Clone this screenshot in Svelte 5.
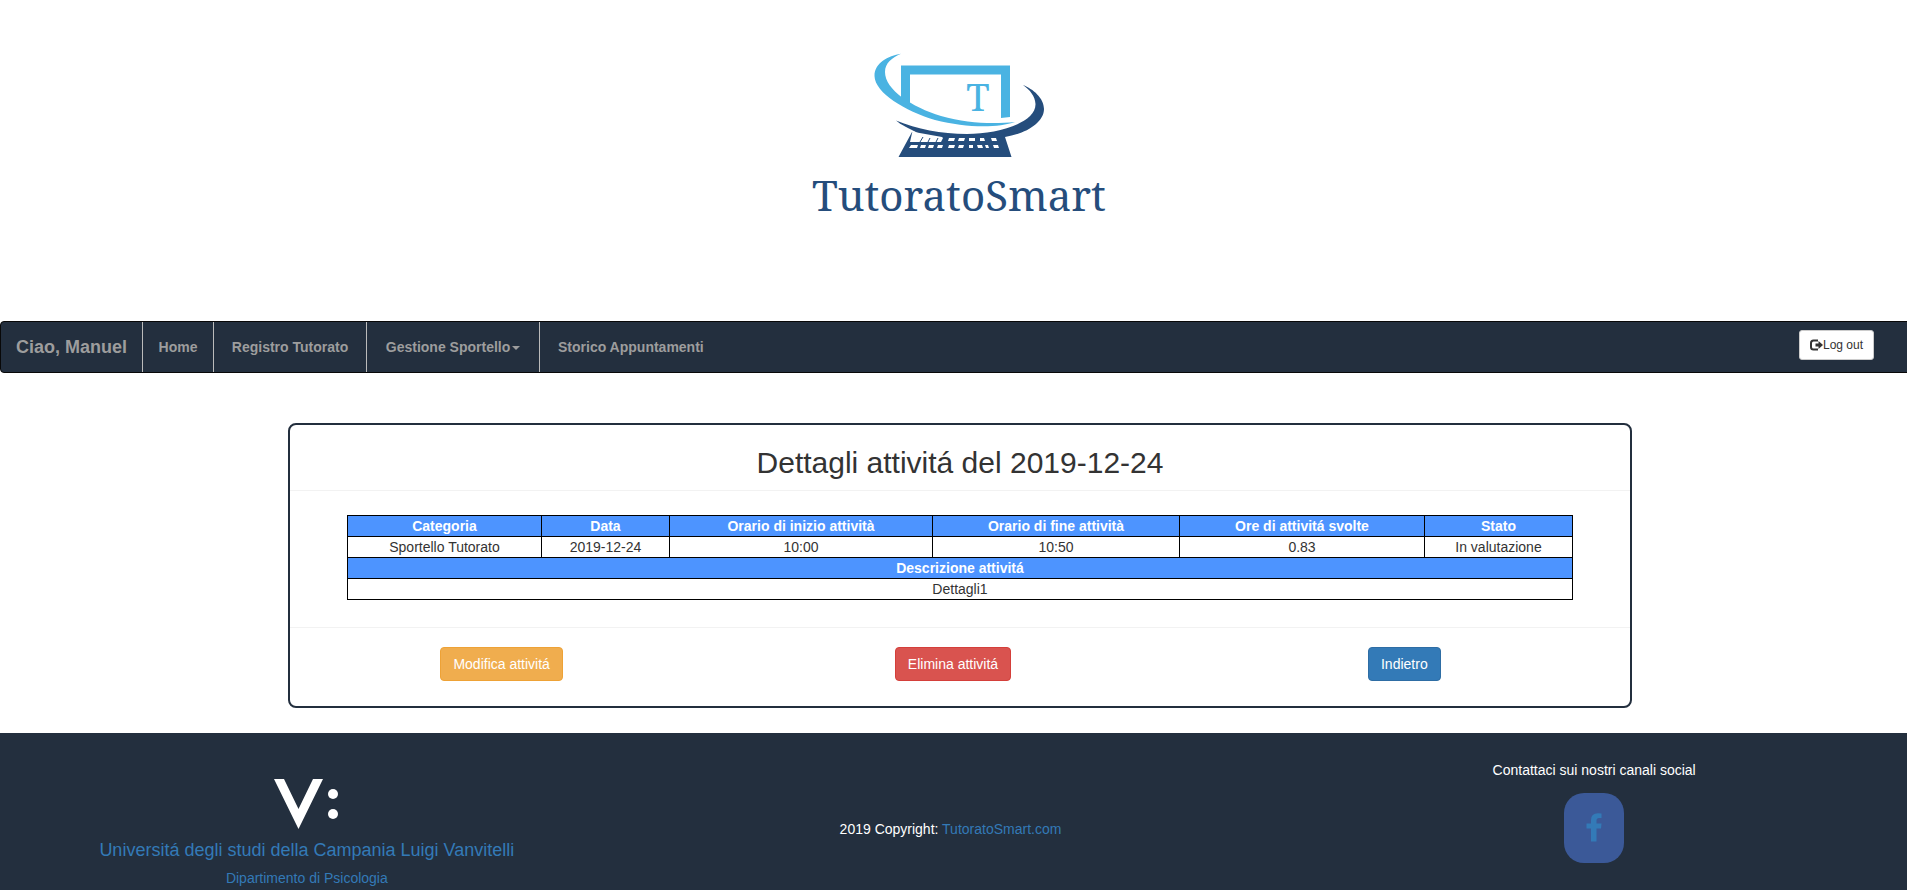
<script>
  const links = [
    { label: 'Home' },
    { label: 'Registro Tutorato' },
    { label: 'Gestione Sportello', menu: true },
    { label: 'Storico Appuntamenti' }
  ];
  const activity = {
    date: '2019-12-24',
    fields: [
      ['Categoria', 'Sportello Tutorato', 194],
      ['Data', '2019-12-24', 128],
      ['Orario di inizio attività', '10:00', 263],
      ['Orario di fine attività', '10:50', 247],
      ['Ore di attivitá svolte', '0.83', 245],
      ['Stato', 'In valutazione', 148]
    ],
    description: 'Dettagli1'
  };
  const total = activity.fields.reduce((sum, field) => sum + field[2], 0);
</script>

<div class="page">
  <header>
    <svg class="logo" viewBox="0 0 340 200" role="img" aria-label="TutoratoSmart">
      <g fill="#4ab3e2">
        <path d="M111 72V35.500H220V87L211 88V44.500H120V78Z" />
        <path d="M111 23.800C98 26 84.500 33 84.500 46C85 63 115 81 145 90C176 98 208 98 225 92C205 94 178 94 151 86C122 77 95 60 95 42C95 33 102 28 111 23.800Z" />
      </g>
      <g fill="#254d7c">
        <path d="M233 55C243 59 254 68 254 79C254 93 235 104 215 107L221.500 127H108.500L122 102L128 103C118 98 111 95 106 90.500C127 99 151 104 177 104C208 104 246 93 245.500 74C245 66 240 60 233 55Z" />
      </g>
      <g fill="#fff">
        <path d="M122.500 101L127 102.500L152 107L153 108L151 112H120Z" />
        <path d="M159 108h6l-1 3h-6ZM169 108h6l-1 3h-6ZM179 108h6v3h-6ZM190 108h4l1 3h-5ZM201 108h5l1 3h-5Z" />
        <path d="M121 115h7l-1 3h-8ZM131 115h5l-1 3h-5ZM139 115h5l-1 3h-5ZM148 115h5l-1 3h-5ZM159 115h6l-1 3h-6ZM169 115h5l-1 3h-5ZM179 115h4v3h-4ZM187 115h5l1 3h-5ZM195 115h3l1 3h-3ZM203 115h5l1 3h-5Z" />
      </g>
      <path d="M130 112l3-5M138 112l2-4M146 112l2-4" stroke="#254d7c" stroke-width="1" />
      <text class="initial" x="188" y="81" text-anchor="middle">T</text>
      <text class="wordmark" x="169" y="181" text-anchor="middle">TutoratoSmart</text>
    </svg>
  </header>

  <nav>
    <a class="brand" href="#home">Ciao, Manuel</a>
    <ul>
      {#each links as link}
        <li>
          <a href="#{link.label}">{link.label}{#if link.menu}<span class="caret"></span>{/if}</a>
        </li>
      {/each}
    </ul>
    <button class="logout" type="button">
      <svg width="13" height="12" viewBox="0 0 13 12" aria-hidden="true">
        <path d="M8 1.500H3.500Q1 1.500 1 4V8Q1 10.500 3.500 10.500H8" fill="none" stroke="currentColor" stroke-width="2" />
        <path d="M5.500 4.500H8.500V2L13 6L8.500 10V7.500H5.500Z" fill="currentColor" />
      </svg>Log out
    </button>
  </nav>

  <main>
    <h2>Dettagli attivitá del {activity.date}</h2>
    <div class="details">
      <table>
        <colgroup>
          {#each activity.fields as [, , share]}<col style="width: {(share / total) * 100}%" />{/each}
        </colgroup>
        <thead>
          <tr>{#each activity.fields as [name]}<th>{name}</th>{/each}</tr>
        </thead>
        <tbody>
          <tr>{#each activity.fields as [, value]}<td>{value}</td>{/each}</tr>
          <tr><th colspan="6">Descrizione attivitá</th></tr>
          <tr><td colspan="6">{activity.description}</td></tr>
        </tbody>
      </table>
    </div>
    <div class="actions">
      <div><button class="warning" type="button">Modifica attivitá</button></div>
      <div><button class="danger" type="button">Elimina attivitá</button></div>
      <div><button class="primary" type="button">Indietro</button></div>
    </div>
  </main>

  <footer>
    <div class="columns">
      <div class="university">
        <svg width="66" height="50" viewBox="0 0 66 50" fill="#fff" role="img" aria-label="Vanvitelli">
          <path d="M0 0H10L24.500 30L39 0H49L24.500 50Z" />
          <circle cx="59" cy="15" r="5" />
          <circle cx="59" cy="35" r="5" />
        </svg>
        <a class="name" href="#university">Universitá degli studi della Campania Luigi Vanvitelli</a>
        <a href="#department">Dipartimento di Psicologia</a>
      </div>
      <div class="copyright">2019 Copyright: <a href="#site">TutoratoSmart.com</a></div>
      <div class="social">
        <span>Contattaci sui nostri canali social</span>
        <a class="facebook" href="#facebook" aria-label="Facebook">
          <svg width="16" height="29" viewBox="0 0 16 29" fill="currentColor" aria-hidden="true">
            <path d="M15.500.500V5H13Q10.500 5 10.500 7.500V10.500H15.500L15 15.500H10.500V28.500H5V15.500H.500V10.500H5V7Q5 .300 12 .300Q14 .300 15.500.500Z" />
          </svg>
        </a>
      </div>
    </div>
  </footer>
</div>

<style>
  :global(body) {
    margin: 0;
    overflow-x: hidden;
    background: #fff;
  }
  .page,
  .page * {
    box-sizing: border-box;
  }
  .page {
    width: calc(100% + 13px);
    font: 14px/20px "Liberation Sans", Arial, sans-serif;
    color: #333;
  }
  a {
    color: #337ab7;
    text-decoration: none;
  }
  button {
    font-family: inherit;
    cursor: pointer;
  }
  header {
    display: flex;
    justify-content: center;
    padding: 30px 0 91px;
  }
  .logo {
    width: 340px;
    height: 200px;
  }
  .initial {
    font: 38px "Noto Serif", "DejaVu Serif", serif;
    fill: #4ab3e2;
  }
  .wordmark {
    font: 42px "Noto Serif", "DejaVu Serif", serif;
    fill: #254d7c;
  }
  nav {
    display: flex;
    min-height: 52px;
    padding-right: 45px;
    border: 1px solid #080808;
    border-radius: 4px;
    background: #232f3e;
    font-weight: bold;
  }
  nav a {
    display: block;
    padding: 15px;
    color: #9d9d9d;
  }
  .brand {
    font-size: 18px;
  }
  .brand,
  li:not(:last-child) {
    border-right: 1px solid #bbb;
  }
  ul {
    display: grid;
    grid-template-columns: 71px 153px 173px auto;
    margin: 0;
    padding: 0;
    list-style: none;
  }
  li a {
    padding: 15px 0;
    text-align: center;
  }
  li:last-child a {
    padding: 15px 18px;
  }
  .caret {
    display: inline-block;
    margin-left: 2px;
    vertical-align: middle;
    border-top: 4px solid;
    border-left: 4px solid transparent;
    border-right: 4px solid transparent;
  }
  .logout {
    display: flex;
    align-items: center;
    height: 30px;
    margin: 8px 0 0 auto;
    padding: 0 10px;
    border: 1px solid #ccc;
    border-radius: 3px;
    background: #fff;
    color: #333;
    font-size: 12px;
  }
  main {
    width: 70%;
    margin: 50px auto 25px;
    border: 2px solid #232f3e;
    border-radius: 8px;
  }
  h2 {
    margin: 0;
    padding: 21px 15px 11px;
    border-bottom: 1px solid #f2f2f2;
    font-size: 30px;
    font-weight: normal;
    line-height: 33px;
    text-align: center;
  }
  .details {
    padding: 24px 57px 27px;
    border-bottom: 1px solid #f2f2f2;
  }
  table {
    width: 100%;
    border-collapse: collapse;
    text-align: center;
  }
  th,
  td {
    padding: 0;
    border: 1px solid #000;
  }
  th {
    background: #4d94ff;
    color: #fff;
  }
  .actions {
    display: grid;
    grid-template-columns: repeat(3, 1fr);
    margin-left: -14px;
    padding: 19px 0 25px;
    text-align: center;
  }
  .actions button {
    height: 34px;
    padding: 0 12px;
    border: 1px solid;
    border-radius: 4px;
    color: #fff;
    font-size: 14px;
  }
  .actions .warning {
    border-color: #eea236;
    background: #f0ad4e;
  }
  .actions .danger {
    border-color: #d43f3a;
    background: #d9534f;
  }
  .actions .primary {
    border-color: #2e6da4;
    background: #337ab7;
  }
  footer {
    padding: 0 19px 2px 0;
    background: #232f3e;
    color: #fff;
  }
  .columns {
    display: grid;
    grid-template-columns: repeat(3, 1fr);
    margin: 0 -15px;
    text-align: center;
  }
  .university {
    display: flex;
    flex-direction: column;
    align-items: center;
    gap: 8px;
    padding-top: 46px;
  }
  .university svg {
    margin-bottom: 3px;
  }
  .university .name {
    font-size: 18px;
  }
  .copyright {
    padding-top: 86px;
  }
  .social {
    display: flex;
    flex-direction: column;
    align-items: center;
    gap: 13px;
    padding-top: 27px;
  }
  .facebook {
    display: flex;
    align-items: center;
    justify-content: center;
    width: 60px;
    height: 70px;
    border-radius: 20px;
    background: #3b5998;
  }
  .facebook svg {
    margin-bottom: 2px;
  }
</style>
